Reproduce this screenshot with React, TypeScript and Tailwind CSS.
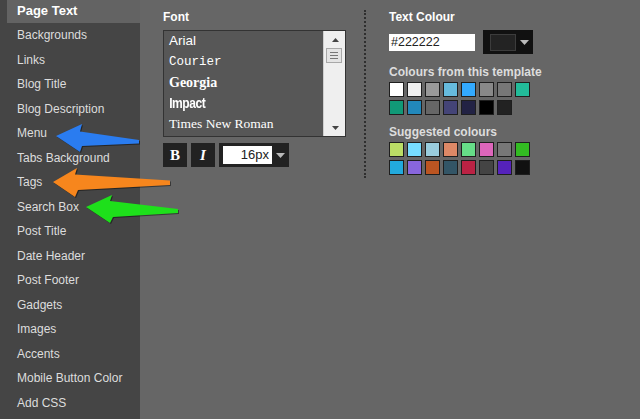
import React from "react";

const items = [
  "Backgrounds",
  "Links",
  "Blog Title",
  "Blog Description",
  "Menu",
  "Tabs Background",
  "Tags",
  "Search Box",
  "Post Title",
  "Date Header",
  "Post Footer",
  "Gadgets",
  "Images",
  "Accents",
  "Mobile Button Color",
  "Add CSS",
];

const templateColours = [
  "#ffffff", "#eeeeee", "#999999", "#66bbdd", "#33aaff", "#888888", "#777777", "#22bb99",
  "#119977", "#2288bb", "#666666", "#444477", "#222244", "#000000", "#222222",
];

const suggestedColours = [
  "#bbdd66", "#77ddff", "#99ccdd", "#dd8866", "#66dd88", "#dd66bb", "#777777", "#33bb22",
  "#22aadd", "#8866dd", "#bb5522", "#335566", "#bb2244", "#444444", "#5522bb", "#111111",
];

function Swatches({ colours }: { colours: string[] }) {
  return (
    <div className="grid grid-cols-[repeat(8,15px)] gap-[3px]">
      {colours.map((c, i) => (
        <div
          key={i}
          className="h-[15px] w-[15px] border border-[#1e1e1e]"
          style={{ backgroundColor: c }}
        />
      ))}
    </div>
  );
}

function Caret({ className }: { className?: string }) {
  return (
    <svg width="9" height="5" viewBox="0 0 9 5" className={className}>
      <polygon points="0,0 9,0 4.5,5" fill="#bbbbbb" />
    </svg>
  );
}

function Arrows() {
  return (
    <svg
      className="pointer-events-none absolute left-0 top-0"
      width="640"
      height="419"
      style={{ filter: "drop-shadow(1px 1px 0.6px rgba(0,0,0,0.45))" }}
    >
      <polygon
        points="56,136 82,124 80,131.5 139,140 139,143.5 82,146 80,152"
        fill="#2a7cf0"
      />
      <polygon
        points="53,182 77,168 75,174.5 170,180.5 170,185 78,190 75,197"
        fill="#f7861d"
      />
      <polygon
        points="86,207 112,195 110,201 178,209 178,213 113,217 110,223"
        fill="#1ee01b"
      />
    </svg>
  );
}

export default function App() {
  return (
    <div className="relative flex h-[419px] w-[640px] overflow-hidden bg-[#666666] font-['Liberation_Sans',Arial,sans-serif]">
      <aside className="flex w-[140px] shrink-0 flex-col bg-[#454545]">
        <div className="ml-[7px] h-[23px] bg-[#636363] pl-[10px] text-[13px] font-bold leading-[21px] text-white">
          Page Text
        </div>
        {items.map((it) => (
          <div
            key={it}
            className="flex h-[24.5px] items-center pl-[17px] text-[12px] text-[#dddddd]"
          >
            {it}
          </div>
        ))}
      </aside>

      <main className="flex pl-[23px] pt-[10px]">
        <section className="w-[183px]">
          <div className="text-[12px] font-bold leading-[14px] text-white">Font</div>
          <div className="mt-[6px] flex h-[107px] border border-[#333333] bg-[#575757]">
            <div className="flex flex-1 flex-col text-white">
              <div className="flex h-[20.6px] items-center pl-[5px] text-[13.5px] font-['Liberation_Sans',Arial,sans-serif]">
                Arial
              </div>
              <div className="flex h-[20.6px] items-center pl-[5px] text-[12.5px] font-['Liberation_Mono','Courier_New',monospace]">
                Courier
              </div>
              <div className="flex h-[20.6px] items-center pl-[5px] text-[14px] font-bold font-['Liberation_Serif',Georgia,serif]">
                Georgia
              </div>
              <div className="flex h-[20.6px] origin-left scale-x-[0.86] items-center pl-[6px] text-[14px] font-black tracking-[-0.5px] font-['Liberation_Sans',sans-serif]">
                Impact
              </div>
              <div className="flex h-[20.6px] items-center pl-[5px] text-[13.5px] font-['Liberation_Serif','Times_New_Roman',serif]">
                Times New Roman
              </div>
            </div>
            <div className="relative w-[22px] border-l border-[#cfcfcf] bg-[#efefef]">
              <svg width="7" height="4" viewBox="0 0 7 4" className="absolute left-[8px] top-[7px]">
                <polygon points="3.5,0 7,4 0,4" fill="#444" />
              </svg>
              <div className="absolute left-[2px] top-[17px] flex h-[15px] w-[16px] flex-col items-center justify-center gap-[2px] border border-[#a8a8a8] bg-[#e4e4e4]">
                <div className="h-px w-[8px] bg-[#777]" />
                <div className="h-px w-[8px] bg-[#777]" />
                <div className="h-px w-[8px] bg-[#777]" />
              </div>
              <svg width="7" height="4" viewBox="0 0 7 4" className="absolute bottom-[6px] left-[8px]">
                <polygon points="0,0 7,0 3.5,4" fill="#444" />
              </svg>
            </div>
          </div>
          <div className="mt-[6px] flex gap-[4px]">
            <div className="flex h-[24px] w-[24px] items-center justify-center bg-[#222222] font-['Liberation_Serif',serif] text-[15px] font-bold text-white">
              B
            </div>
            <div className="flex h-[24px] w-[24px] items-center justify-center bg-[#222222] font-['Liberation_Serif',serif] text-[15px] font-bold italic text-white">
              I
            </div>
            <div className="flex h-[24px] w-[70px] items-center gap-[4px] bg-[#222222] pl-[4px]">
              <div className="flex h-[18px] w-[49px] items-center justify-end bg-white pr-[3px] text-[13px] text-[#222]">
                16px
              </div>
              <Caret />
            </div>
          </div>
        </section>

        <div className="ml-[18px] h-[168px] border-l-2 border-dotted border-[#2f2f2f]" />

        <section className="ml-[23px]">
          <div className="text-[12px] font-bold leading-[14px] text-white">Text Colour</div>
          <div className="mt-[6px] flex items-center gap-[8px]">
            <div className="flex h-[17px] w-[86px] items-center bg-white pl-[2px] text-[12.5px] text-[#222]">
              #222222
            </div>
            <div className="flex h-[24px] w-[50px] items-center bg-[#111111] pl-[7px]">
              <div className="h-[17px] w-[26px] border border-[#3c3c3c] bg-[#232323]" />
              <Caret className="ml-[4px]" />
            </div>
          </div>
          <div className="mt-[11px] text-[12px] font-bold leading-[14px] text-[#dddddd]">
            Colours from this template
          </div>
          <div className="mt-[3px]">
            <Swatches colours={templateColours} />
          </div>
          <div className="mt-[10px] text-[12px] font-bold leading-[14px] text-[#dddddd]">
            Suggested colours
          </div>
          <div className="mt-[3px]">
            <Swatches colours={suggestedColours} />
          </div>
        </section>
      </main>

      <Arrows />
    </div>
  );
}
